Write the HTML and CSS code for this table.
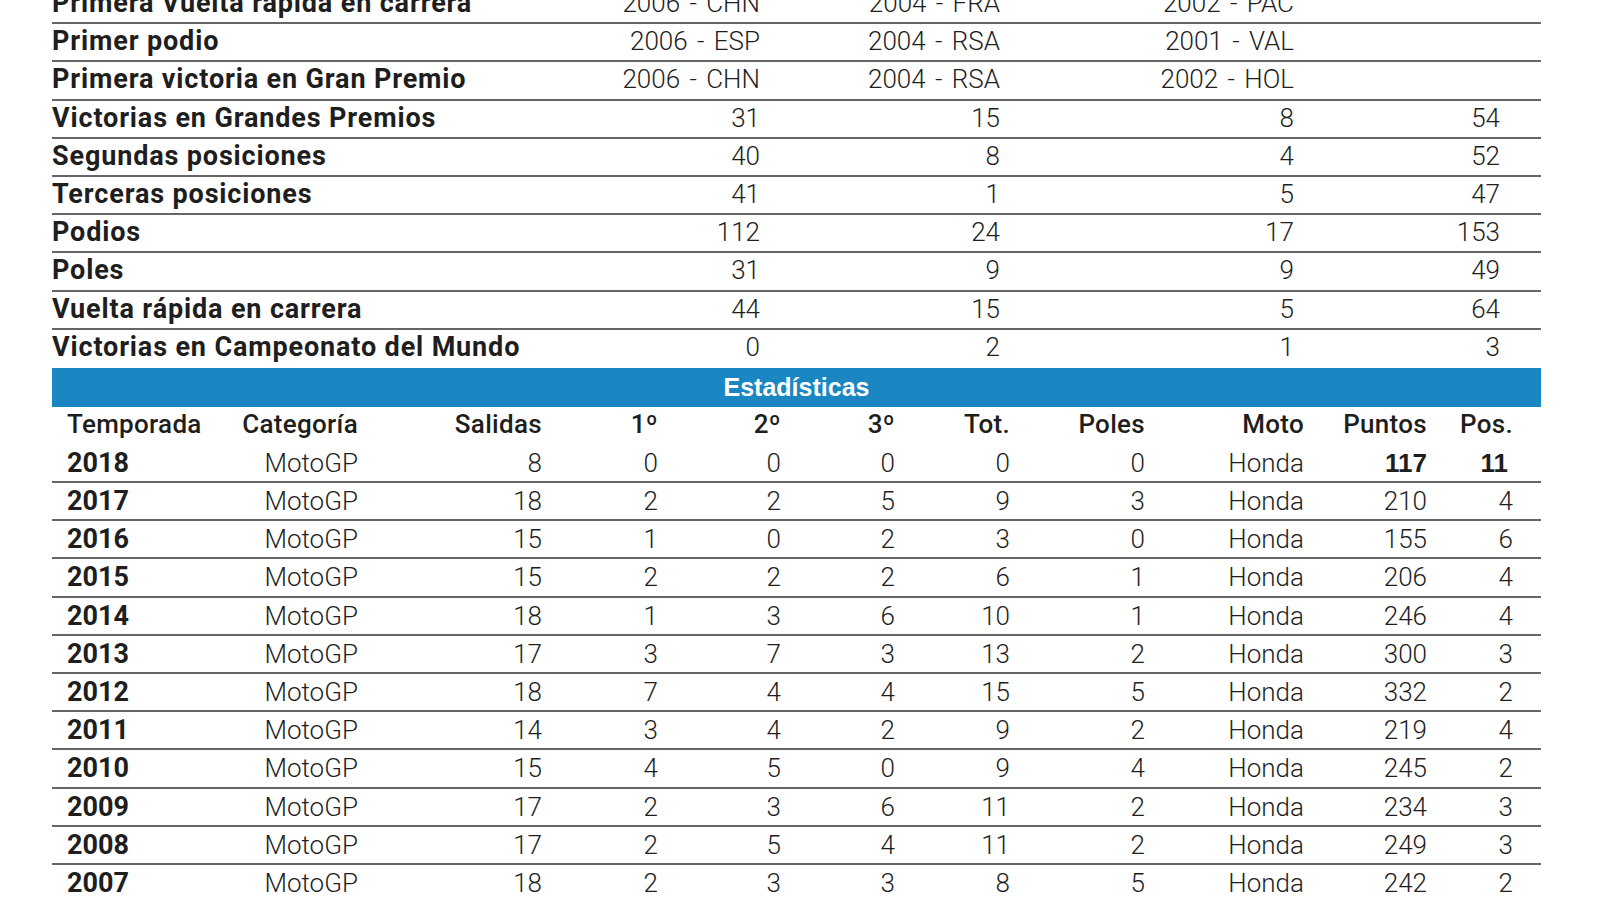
FILE: index.html
```html
<!DOCTYPE html>
<html lang="es">
<head>
<meta charset="utf-8">
<title>Estadísticas</title>
<link rel="stylesheet" href="styles.css">
</head>
<body>
<div class="sheet">
  <div class="summary">
    <div class="srow"><span class="lbl">Primera Vuelta rápida en carrera</span><span class="v">2006 - CHN</span><span class="v">2004 - FRA</span><span class="v">2002 - PAC</span><span class="v"></span><span></span></div>
    <div class="srow"><span class="lbl">Primer podio</span><span class="v">2006 - ESP</span><span class="v">2004 - RSA</span><span class="v">2001 - VAL</span><span class="v"></span><span></span></div>
    <div class="srow"><span class="lbl">Primera victoria en Gran Premio</span><span class="v">2006 - CHN</span><span class="v">2004 - RSA</span><span class="v">2002 - HOL</span><span class="v"></span><span></span></div>
    <div class="srow"><span class="lbl">Victorias en Grandes Premios</span><span class="v">31</span><span class="v">15</span><span class="v">8</span><span class="v">54</span><span></span></div>
    <div class="srow"><span class="lbl">Segundas posiciones</span><span class="v">40</span><span class="v">8</span><span class="v">4</span><span class="v">52</span><span></span></div>
    <div class="srow"><span class="lbl">Terceras posiciones</span><span class="v">41</span><span class="v">1</span><span class="v">5</span><span class="v">47</span><span></span></div>
    <div class="srow"><span class="lbl">Podios</span><span class="v">112</span><span class="v">24</span><span class="v">17</span><span class="v">153</span><span></span></div>
    <div class="srow"><span class="lbl">Poles</span><span class="v">31</span><span class="v">9</span><span class="v">9</span><span class="v">49</span><span></span></div>
    <div class="srow"><span class="lbl">Vuelta rápida en carrera</span><span class="v">44</span><span class="v">15</span><span class="v">5</span><span class="v">64</span><span></span></div>
    <div class="srow"><span class="lbl">Victorias en Campeonato del Mundo</span><span class="v">0</span><span class="v">2</span><span class="v">1</span><span class="v">3</span><span></span></div>
  </div>
  <div class="band">Estadísticas</div>
  <div class="stats">
    <div class="trow head"><span class="yr">Temporada</span><span>Categoría</span><span>Salidas</span><span>1º</span><span>2º</span><span>3º</span><span>Tot.</span><span>Poles</span><span>Moto</span><span>Puntos</span><span>Pos.</span><span></span></div>
    <div class="trow"><span class="yr">2018</span><span>MotoGP</span><span>8</span><span>0</span><span>0</span><span>0</span><span>0</span><span>0</span><span>Honda</span><span class="hi">117</span><span class="hi hi-pos">11</span><span></span></div>
    <div class="trow"><span class="yr">2017</span><span>MotoGP</span><span>18</span><span>2</span><span>2</span><span>5</span><span>9</span><span>3</span><span>Honda</span><span>210</span><span>4</span><span></span></div>
    <div class="trow"><span class="yr">2016</span><span>MotoGP</span><span>15</span><span>1</span><span>0</span><span>2</span><span>3</span><span>0</span><span>Honda</span><span>155</span><span>6</span><span></span></div>
    <div class="trow"><span class="yr">2015</span><span>MotoGP</span><span>15</span><span>2</span><span>2</span><span>2</span><span>6</span><span>1</span><span>Honda</span><span>206</span><span>4</span><span></span></div>
    <div class="trow"><span class="yr">2014</span><span>MotoGP</span><span>18</span><span>1</span><span>3</span><span>6</span><span>10</span><span>1</span><span>Honda</span><span>246</span><span>4</span><span></span></div>
    <div class="trow"><span class="yr">2013</span><span>MotoGP</span><span>17</span><span>3</span><span>7</span><span>3</span><span>13</span><span>2</span><span>Honda</span><span>300</span><span>3</span><span></span></div>
    <div class="trow"><span class="yr">2012</span><span>MotoGP</span><span>18</span><span>7</span><span>4</span><span>4</span><span>15</span><span>5</span><span>Honda</span><span>332</span><span>2</span><span></span></div>
    <div class="trow"><span class="yr">2011</span><span>MotoGP</span><span>14</span><span>3</span><span>4</span><span>2</span><span>9</span><span>2</span><span>Honda</span><span>219</span><span>4</span><span></span></div>
    <div class="trow"><span class="yr">2010</span><span>MotoGP</span><span>15</span><span>4</span><span>5</span><span>0</span><span>9</span><span>4</span><span>Honda</span><span>245</span><span>2</span><span></span></div>
    <div class="trow"><span class="yr">2009</span><span>MotoGP</span><span>17</span><span>2</span><span>3</span><span>6</span><span>11</span><span>2</span><span>Honda</span><span>234</span><span>3</span><span></span></div>
    <div class="trow"><span class="yr">2008</span><span>MotoGP</span><span>17</span><span>2</span><span>5</span><span>4</span><span>11</span><span>2</span><span>Honda</span><span>249</span><span>3</span><span></span></div>
    <div class="trow"><span class="yr">2007</span><span>MotoGP</span><span>18</span><span>2</span><span>3</span><span>3</span><span>8</span><span>5</span><span>Honda</span><span>242</span><span>2</span><span></span></div>
  </div>
</div>
</body>
</html>
```

FILE: styles.css
```css
html, body {
  margin: 0;
  padding: 0;
  background: #ffffff;
  overflow: hidden;
}

.sheet {
  width: 1489px;
  margin: -14px 0 0 52px;
  font-family: Roboto, "Liberation Sans", sans-serif;
  color: #1e1e1e;
}

.srow {
  display: grid;
  grid-template-columns: 508px 200px 240px 294px 206px 41px;
  align-items: start;
  height: 38.2px;
  line-height: 34px;
  box-sizing: border-box;
  border-bottom: 2px solid #666666;
  white-space: nowrap;
}

.srow:last-child {
  border-bottom: none;
}

.lbl {
  font-weight: 700;
  font-size: 27px;
  letter-spacing: 0.85px;
}

.v {
  text-align: right;
  font-weight: 300;
  font-size: 26px;
  word-spacing: 3px;
}

.band {
  height: 38.8px;
  display: flex;
  align-items: center;
  justify-content: center;
  background: #1a87c2;
  color: #ffffff;
  font-family: "Liberation Sans", Arial, sans-serif;
  font-weight: 700;
  font-size: 25px;
}

.trow {
  display: grid;
  grid-template-columns: 148px 158px 184px 116px 123px 114px 115px 135px 159px 123px 86px 28px;
  align-items: start;
  height: 38.2px;
  line-height: 36px;
  box-sizing: border-box;
  border-bottom: 2px solid #666666;
  white-space: nowrap;
  font-weight: 300;
  font-size: 26px;
}

.trow > span {
  text-align: right;
}

.trow > .yr {
  text-align: left;
  padding-left: 15px;
  font-weight: 700;
  font-size: 27px;
}

.trow.head {
  border-bottom: none;
  font-weight: 500;
  line-height: 34px;
  letter-spacing: 0.3px;
}

.trow.head > .yr {
  font-weight: 500;
  font-size: 26px;
}

.hi {
  font-family: "Liberation Sans", Arial, sans-serif;
  font-weight: 700;
  font-size: 26px;
}

.hi-pos {
  padding-right: 5px;
}
```
